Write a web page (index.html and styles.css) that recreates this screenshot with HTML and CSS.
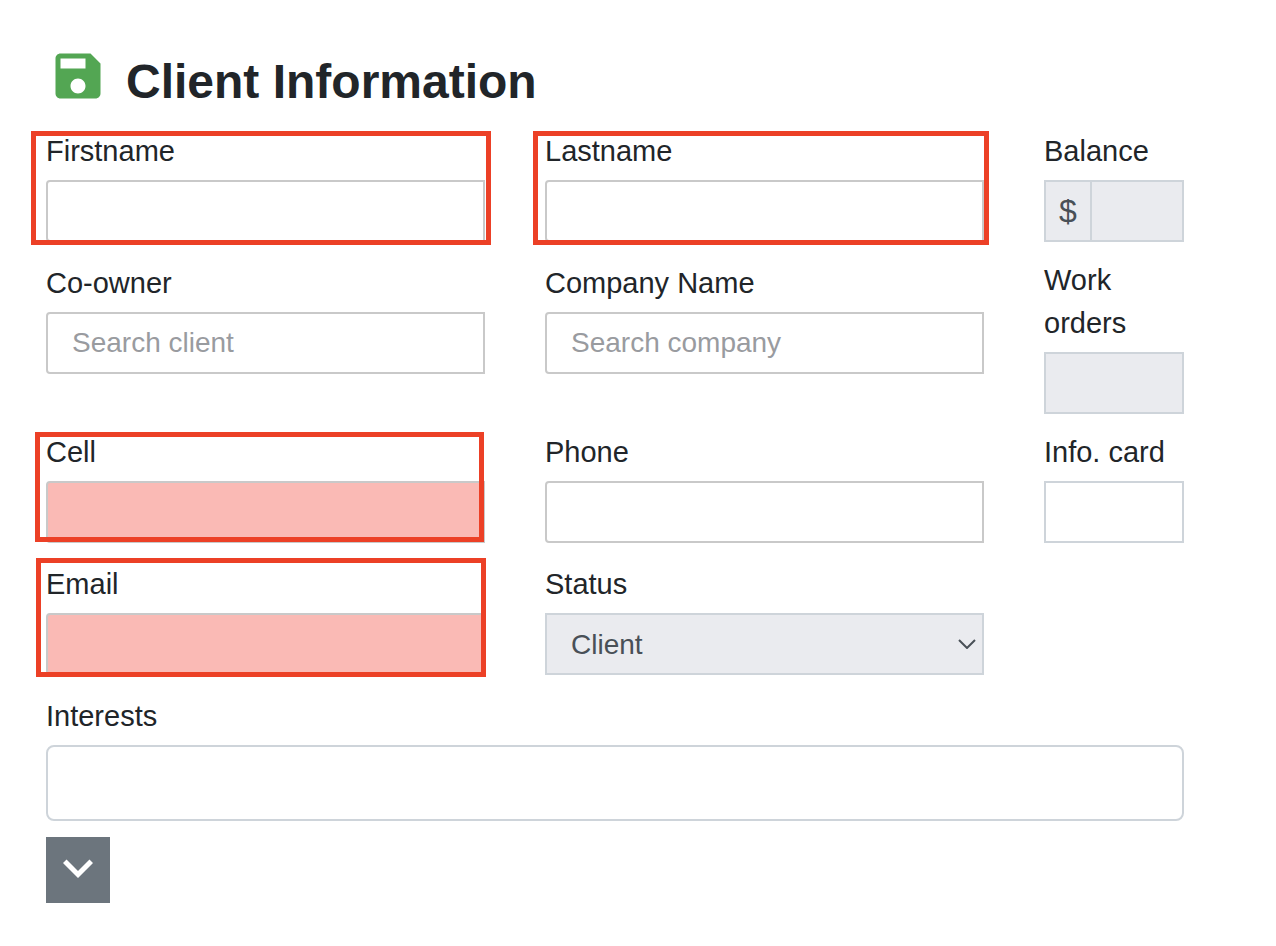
FILE: index.html
```html
<!DOCTYPE html>
<html lang="en">
<head>
  <meta charset="UTF-8" />
  <meta name="viewport" content="width=device-width, initial-scale=1.0" />
  <title>Client Information</title>
  <link rel="stylesheet" href="styles.css">
</head>
<body>
  <form class="client-form">
    <div class="form-header">
      <button type="button" class="save-button" aria-label="Save">
        <svg viewBox="0 0 24 24"><path d="M17 3H5c-1.11 0-2 .9-2 2v14c0 1.1.89 2 2 2h14c1.1 0 2-.9 2-2V7l-4-4zm-5 16c-1.66 0-3-1.34-3-3s1.34-3 3-3 3 1.34 3 3-1.34 3-3 3zm3-10H5V5h10v4z"/></svg>
      </button>
      <h1>Client Information</h1>
    </div>

    <div class="form-grid">
      <div class="field">
        <label for="firstname">Firstname</label>
        <input type="text" id="firstname" class="control search" />
        <span class="highlight highlight-firstname"></span>
      </div>
      <div class="field">
        <label for="lastname">Lastname</label>
        <input type="text" id="lastname" class="control search" />
        <span class="highlight highlight-lastname"></span>
      </div>

      <!-- right column -->
      <div class="side">
        <div class="field">
          <label for="balance">Balance</label>
          <div class="input-group">
            <span class="prefix">$</span>
            <input type="text" id="balance" class="control" disabled />
          </div>
        </div>
        <div class="field">
          <label for="workOrders">Work orders</label>
          <input type="text" id="workOrders" class="control" disabled />
        </div>
        <div class="field">
          <label for="infoCard">Info. card</label>
          <input type="text" id="infoCard" class="control" />
        </div>
      </div>

      <div class="field">
        <label for="coowner">Co-owner</label>
        <input type="text" id="coowner" class="control search" placeholder="Search client" />
      </div>
      <div class="field">
        <label for="company">Company Name</label>
        <input type="text" id="company" class="control search" placeholder="Search company" />
      </div>

      <div class="field">
        <label for="cell">Cell</label>
        <input type="tel" id="cell" class="control search required" />
        <span class="highlight highlight-cell"></span>
      </div>
      <div class="field">
        <label for="phone">Phone</label>
        <input type="tel" id="phone" class="control search" />
      </div>

      <div class="field">
        <label for="email">Email</label>
        <input type="email" id="email" class="control search required" />
        <span class="highlight highlight-email"></span>
      </div>
      <div class="field">
        <label for="status">Status</label>
        <div class="select-wrap">
          <select id="status" class="control" disabled>
            <option>Client</option>
          </select>
          <svg class="select-arrow" viewBox="0 0 18 10"><path d="M1 1l8 8 8-8"/></svg>
        </div>
      </div>

      <div class="field field-wide">
        <label for="interests">Interests</label>
        <input type="text" id="interests" class="control interests" />
      </div>
    </div>

    <button type="button" class="more-button" aria-label="Show more">
      <svg viewBox="0 0 24 24"><path d="M16.59 8.59L12 13.17 7.41 8.59 6 10l6 6 6-6z"/></svg>
    </button>
  </form>
</body>
</html>
```

FILE: styles.css
```css
* {
  box-sizing: border-box;
}

body {
  margin: 0;
  background-color: #fff;
  color: #212529;
  font-family: "Liberation Sans", Arial, sans-serif;
  font-size: 29px;
  line-height: 43px;
}

.client-form {
  padding: 46px 92px 40px 46px;
}

.form-header {
  display: flex;
  gap: 18px;
  margin-bottom: 16px;
  padding-left: 2px;
}

h1 {
  margin: 0;
  padding-top: 4px;
  font-size: 48px;
  line-height: 64px;
}

button {
  border: none;
  padding: 0;
  cursor: pointer;
}

button svg {
  display: block;
  width: 60px;
  height: 60px;
}

.save-button {
  align-self: flex-start;
  background: none;
  fill: #53a653;
}

.form-grid {
  display: grid;
  grid-template-columns: minmax(0, 1fr) minmax(0, 1fr) 140px;
  grid-template-rows: auto 1fr;
  gap: 20px 60px;
}

/* spans the first three rows */
.side {
  grid-column: 3;
  grid-row: 1 / span 3;
  display: flex;
  flex-direction: column;
  gap: 17px;
}

.field {
  position: relative;
}

.field-wide {
  grid-column: 1 / -1;
}

label {
  display: block;
  margin-bottom: 7px;
}

.control {
  display: block;
  width: 100%;
  height: 62px;
  padding: 0 24px;
  border: 2px solid #ced4da;
  border-radius: 0;
  background-color: #fff;
  color: #495057;
  font-family: inherit;
  font-size: 28px;
  opacity: 1;
}

.control:disabled {
  background-color: #eaebef;
}

.control::placeholder {
  color: #999b9f;
  opacity: 1;
}

.search {
  border-color: #c9c9c9;
  border-radius: 4px 0 0 4px;
}

.required {
  background-color: #fabab5;
}

.input-group {
  display: flex;
}

.prefix {
  flex: none;
  width: 46px;
  height: 62px;
  border: 2px solid #ced4da;
  border-right: none;
  background-color: #eaebef;
  color: #495057;
  font-size: 32px;
  line-height: 58px;
  text-align: center;
}

.input-group .control {
  flex: 1;
  min-width: 0;
}

.select-wrap {
  position: relative;
}

select.control {
  appearance: none;
}

.select-arrow {
  position: absolute;
  top: 26px;
  right: 8px;
  width: 18px;
  height: 10px;
  fill: none;
  stroke: #495057;
  stroke-width: 2;
}

.interests {
  height: 76px;
  border-radius: 8px;
}

.more-button {
  display: block;
  width: 64px;
  height: 66px;
  margin-top: 16px;
  padding: 0 2px 4px;
  background-color: #6c757d;
  fill: #fff;
}

/* red frames over the mandatory fields */
.highlight {
  position: absolute;
  border: 5px solid #ec4026;
  pointer-events: none;
}

.highlight-firstname {
  inset: 1px -6px -3px -15px;
}

.highlight-lastname {
  inset: 1px -5px -3px -12px;
}

.highlight-cell {
  inset: 1px 1px 1px -11px;
}

.highlight-email {
  inset: -5px -1px -2px -10px;
}
```
